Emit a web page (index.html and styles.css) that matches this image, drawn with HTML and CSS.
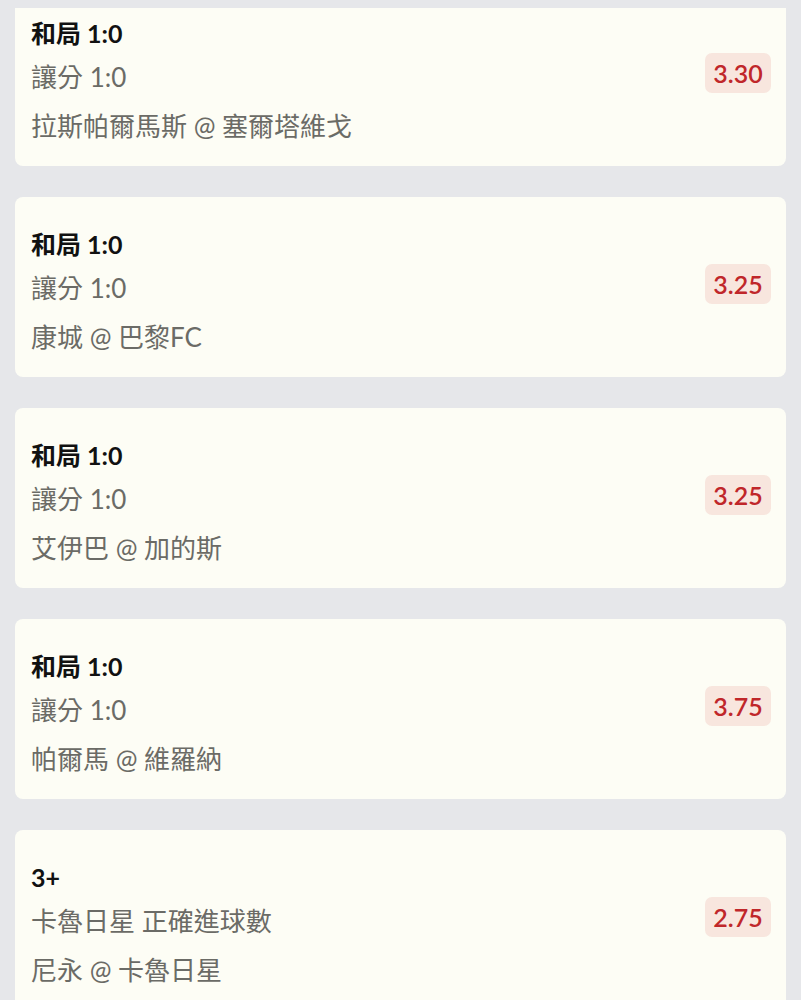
FILE: index.html
```html
<!DOCTYPE html>
<html lang="zh-Hant">
<head>
    <meta charset="UTF-8">
    <meta name="viewport" content="width=device-width, initial-scale=1.0">
    <title>投注記錄</title>
    <link rel="stylesheet" href="styles.css">
</head>
<body>
    <div class="screen">
        <div class="list">
            <div class="bet">
                <div class="info">
                    <div class="pick">和局 1:0</div>
                    <div class="market">讓分 1:0</div>
                    <div class="match">拉斯帕爾馬斯 @ 塞爾塔維戈</div>
                </div>
                <div class="odds">3.30</div>
            </div>

            <div class="bet">
                <div class="info">
                    <div class="pick">和局 1:0</div>
                    <div class="market">讓分 1:0</div>
                    <div class="match">康城 @ 巴黎FC</div>
                </div>
                <div class="odds">3.25</div>
            </div>

            <div class="bet">
                <div class="info">
                    <div class="pick">和局 1:0</div>
                    <div class="market">讓分 1:0</div>
                    <div class="match">艾伊巴 @ 加的斯</div>
                </div>
                <div class="odds">3.25</div>
            </div>

            <div class="bet">
                <div class="info">
                    <div class="pick">和局 1:0</div>
                    <div class="market">讓分 1:0</div>
                    <div class="match">帕爾馬 @ 維羅納</div>
                </div>
                <div class="odds">3.75</div>
            </div>

            <div class="bet">
                <div class="info">
                    <div class="pick">3+</div>
                    <div class="market">卡魯日星 正確進球數</div>
                    <div class="match">尼永 @ 卡魯日星</div>
                </div>
                <div class="odds">2.75</div>
            </div>
        </div>
    </div>
</body>
</html>
```

FILE: styles.css
```css
body {
    margin: 0;
    background: #e6e7ea;
    font-family: "Lato", "Noto Sans CJK TC", sans-serif;
    color: #111;
}
.screen {
    margin-top: 8px;
    height: 992px;
    overflow: hidden;
}
/* list is scrolled a little, first card sits under the top edge */
.list {
    margin-top: -22px;
    padding: 0 15px;
    display: flex;
    flex-direction: column;
    gap: 31px;
}
.bet {
    height: 180px;
    box-sizing: border-box;
    background: #fdfdf5;
    border-radius: 8px;
    padding: 25px 15px 0 16px;
    display: flex;
    align-items: center;
    justify-content: space-between;
}
.info {
    align-self: flex-start;
    display: flex;
    flex-direction: column;
}
.pick {
    font-size: 25px;
    font-weight: 700;
    line-height: 44px;
}
.market,
.match {
    font-size: 26px;
    line-height: 44px;
    color: #6b6b66;
}
.match {
    margin-top: 5px;
}
.odds {
    margin-top: -31px;
    width: 66px;
    height: 40px;
    border-radius: 7px;
    background: #f8e6de;
    color: #c0272a;
    font-size: 25px;
    font-weight: 600;
    display: flex;
    align-items: center;
    justify-content: center;
}
```
